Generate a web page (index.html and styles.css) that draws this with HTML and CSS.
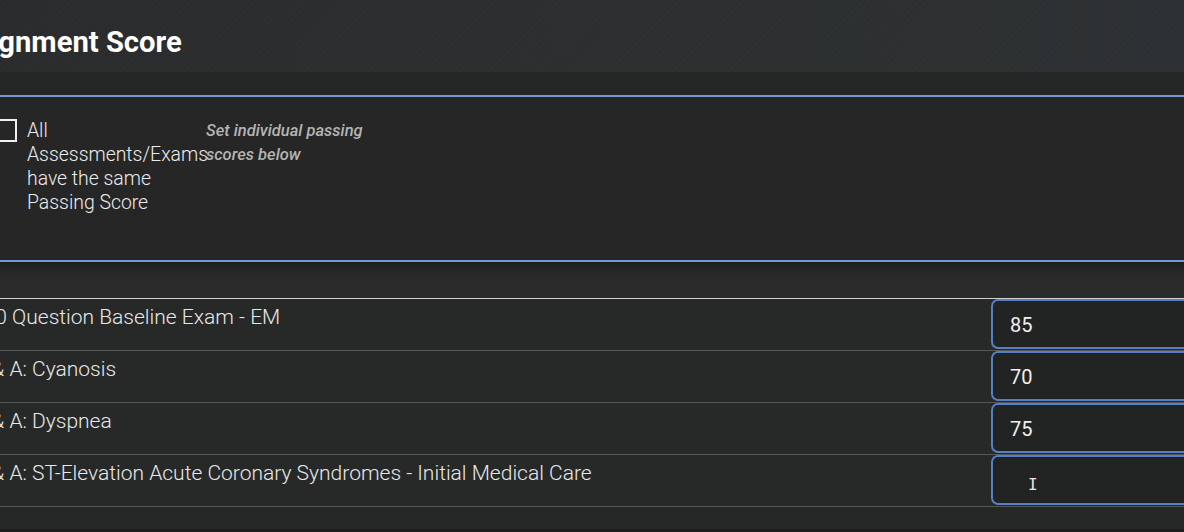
FILE: index.html
```html
<!DOCTYPE html>
<html lang="en">
<head>
<meta charset="UTF-8">
<meta name="viewport" content="width=device-width, initial-scale=1.0">
<title>Assignment Score</title>
<link rel="stylesheet" href="styles.css">
</head>
<body>

<div class="page">
    <div class="title-bar">
        <h2>Assignment Score</h2>
    </div>

    <div class="spacer"></div>

    <div class="options">
        <label class="same-score">
            <input type="checkbox" class="check">
            <span class="check-label">All Assessments/Exams have the same Passing Score</span>
        </label>
        <p class="hint">Set individual passing scores below</p>
    </div>

    <div class="gap"></div>

    <ul class="score-list">
        <li class="score-row">
            <span class="exam-name">100 Question Baseline Exam - EM</span>
            <input type="text" class="score-input" value="85">
        </li>
        <li class="score-row">
            <span class="exam-name">Q &amp; A: Cyanosis</span>
            <input type="text" class="score-input" value="70">
        </li>
        <li class="score-row">
            <span class="exam-name">Q &amp; A: Dyspnea</span>
            <input type="text" class="score-input" value="75">
        </li>
        <li class="score-row">
            <span class="exam-name">Q &amp; A: ST-Elevation Acute Coronary Syndromes - Initial Medical Care</span>
            <input type="text" class="score-input" value="">
            <span class="cursor">I</span>
        </li>
    </ul>

    <div class="footer"></div>
</div>

</body>
</html>
```

FILE: styles.css
```css
body, html {
    margin: 0;
    padding: 0;
    height: 100%;
    overflow: hidden;
    background-color: #1f1f1f;
}

.page {
    width: 1320px;
    margin-left: -60px;
    font-family: Roboto, "Liberation Sans", sans-serif;
    color: #e6e6e6;
    background-color: #262626;
}

.title-bar {
    height: 72px;
    display: flex;
    align-items: center;
    background-color: #2b2d2e;
    background-image:
        repeating-linear-gradient(-45deg, rgba(255, 255, 255, 0.008) 0 2px, rgba(0, 0, 0, 0) 2px 5px),
        linear-gradient(90deg, #2a2b2c, #2e3133);
}

.title-bar h2 {
    margin: 0;
    padding-left: 1px;
    padding-top: 12px;
    font-size: 29.2px;
    font-weight: 700;
    color: #fff;
}

.spacer {
    height: 23px;
    background-color: #252626;
}

.options {
    height: 167px;
    box-sizing: border-box;
    border-top: 2px solid #7199d3;
    border-bottom: 2px solid #7199d3;
    background-color: #262626;
    display: flex;
    align-items: flex-start;
    padding-top: 22px;
    padding-left: 55px;
}

.same-score {
    display: flex;
    align-items: flex-start;
    gap: 10px;
}

.check {
    appearance: none;
    margin: 0;
    width: 22px;
    height: 23px;
    border: 2px solid #f2f2f2;
    background: transparent;
}

.check-label {
    width: 179px;
    font-size: 19.4px;
    font-weight: 300;
    line-height: 24px;
    color: #ececec;
}

.hint {
    margin: 0;
    width: 170px;
    font-size: 16.5px;
    font-style: italic;
    font-weight: 500;
    line-height: 24px;
    color: #b5b5b5;
}

.gap {
    height: 36px;
    background-image: linear-gradient(#1f1f1f, #2a2a2a 40%, #2a2b2b);
}

.score-list {
    list-style-type: none;
    margin: 0;
    padding: 0;
    border-top: 1px solid #cfcfcf;
}

.score-row {
    position: relative;
    height: 51px;
    display: flex;
    align-items: flex-start;
    justify-content: space-between;
    padding-left: 32px;
    padding-right: 9px;
    border-bottom: 1px solid #575757;
    background-color: #272828;
}

.exam-name {
    padding-top: 6px;
    font-size: 21px;
    font-weight: 300;
    line-height: 24px;
    color: #e8e8e8;
}

.score-input {
    width: 260px;
    height: 50px;
    box-sizing: border-box;
    padding: 2px 0 0 17px;
    border: 2px solid #5580c4;
    border-radius: 7px;
    background-color: #222323;
    color: #f0f0f0;
    font-family: Roboto, "Liberation Sans", sans-serif;
    font-size: 20px;
    outline: none;
}

.cursor {
    position: absolute;
    left: 1088px;
    top: 20px;
    font-family: "DejaVu Sans Mono", monospace;
    font-size: 16px;
    color: #e8e8e8;
}

.footer {
    height: 22px;
    background-color: #262727;
    border-bottom: 4px solid #1d1d1d;
}
```
